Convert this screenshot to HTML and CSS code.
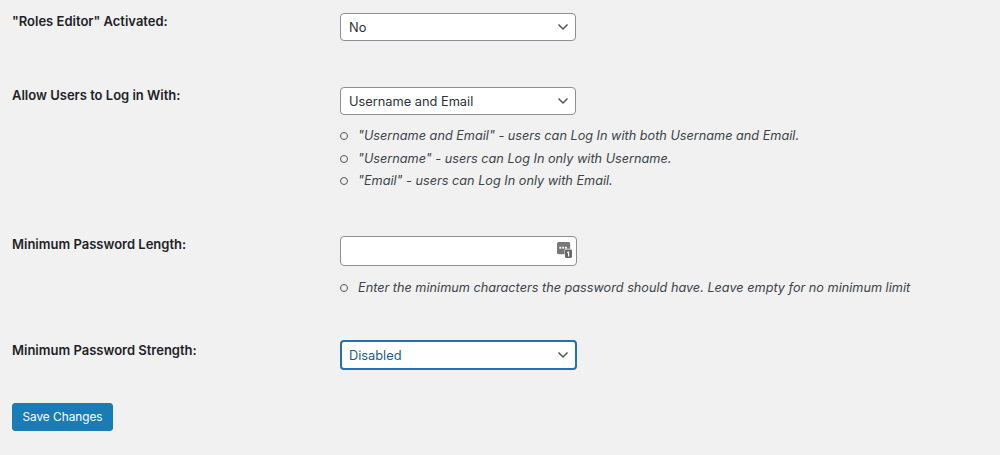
FILE: index.html
```html
<!DOCTYPE html>
<html lang="en">
<head>
<meta charset="utf-8">
<title>Settings</title>
<link rel="stylesheet" href="styles.css">
</head>
<body>
<form class="settings">
  <div class="row row-roles">
    <label class="label">"Roles Editor" Activated:</label>
    <div class="field">
      <select class="select"><option>No</option></select>
    </div>
  </div>
  <div class="row row-login">
    <label class="label">Allow Users to Log in With:</label>
    <div class="field">
      <select class="select"><option>Username and Email</option></select>
      <ul class="hints">
        <li>"Username and Email" - users can Log In with both Username and Email.</li>
        <li>"Username" - users can Log In only with Username.</li>
        <li>"Email" - users can Log In only with Email.</li>
      </ul>
    </div>
  </div>
  <div class="row row-length">
    <label class="label">Minimum Password Length:</label>
    <div class="field">
      <div class="input-wrap">
        <input class="input" type="text">
        <svg class="pw-icon" width="15" height="17" viewBox="0 0 16 18" aria-hidden="true">
          <path fill="#777" d="M2 0h10.500A1.500 1.500 0 0 1 14 1.500V7h-3.500A2.500 2.500 0 0 0 8 9.500V13H2a2 2 0 0 1-2-2V2a2 2 0 0 1 2-2z"/>
          <rect x="2.500" y="5" width="2" height="2" fill="#fff"/>
          <rect x="5.500" y="5" width="2" height="2" fill="#fff"/>
          <rect x="8.500" y="5" width="2" height="2" fill="#fff"/>
          <rect x="8.500" y="8" width="7.500" height="9" rx="1.500" fill="#666"/>
          <path fill="#fff" d="M11.700 10h1.300v5.500h-1.300v-4l-1 .5v-1.100z"/>
        </svg>
      </div>
      <ul class="hints hints-single">
        <li>Enter the minimum characters the password should have. Leave empty for no minimum limit</li>
      </ul>
    </div>
  </div>
  <div class="row row-strength">
    <label class="label">Minimum Password Strength:</label>
    <div class="field">
      <select class="select select-focus"><option>Disabled</option></select>
    </div>
  </div>
  <button class="save" type="button">Save Changes</button>
</form>
</body>
</html>
```
FILE: styles.css
```css
* { box-sizing: border-box; }
html, body { margin: 0; height: 455px; overflow: hidden; }
body {
  background: #f1f1f1;
  color: #2c3338;
  font-family: Inter, "Liberation Sans", sans-serif;
  font-size: 13px;
}
.settings { padding: 13px 0 0 12px; }
.row { display: flex; align-items: flex-start; }
.row-login { margin-top: 46px; }
.row-length { margin-top: 43px; }
.row-strength { margin-top: 41px; }
.label {
  flex: 0 0 328px;
  font-weight: 600;
  font-size: 13px;
  line-height: 16px;
  color: #1d2327;
}
.row-strength .label { padding-top: 2px; }
.field { flex: 0 0 auto; }
.select {
  display: block;
  appearance: none;
  width: 236px;
  height: 28px;
  margin: 0;
  padding: 1px 24px 0 8px;
  font: 12.800px/26px Inter, "Liberation Sans", sans-serif;
  color: #2c3338;
  background: #fff url("data:image/svg+xml,%3Csvg xmlns='http://www.w3.org/2000/svg' width='12' height='8' viewBox='0 0 12 8'%3E%3Cpath d='M1.500 1.500 6 6l4.500-4.500' fill='none' stroke='%23555' stroke-width='1.500'/%3E%3C/svg%3E") no-repeat right 6px center;
  border: 1px solid #8c8f94;
  border-radius: 4px;
}
.select-focus {
  width: 237px;
  height: 30px;
  color: #135e96;
  border: 2px solid #2271b1;
  padding-left: 7px;
}
.hints {
  list-style: none;
  margin: 10px 0 0;
  padding: 0;
  font-style: italic;
  font-size: 12.700px;
  line-height: 22.500px;
  color: #3c434a;
  white-space: nowrap;
}
.hints-single { margin-top: 11px; }
.hints li { display: flex; align-items: center; gap: 10px; }
.hints li::before {
  content: "";
  flex: 0 0 6px;
  height: 6px;
  border: 1px solid #555;
  border-radius: 50%;
}
.input-wrap { position: relative; width: 237px; }
.input {
  display: block;
  width: 100%;
  height: 30px;
  background: #fff;
  border: 1px solid #8c8f94;
  border-radius: 4px;
}
.pw-icon { position: absolute; top: 6px; right: 5px; }
.save {
  display: block;
  margin-top: 33px;
  width: 101px;
  height: 28px;
  padding: 0;
  background: #1a7cb7;
  border: 1px solid #1a7cb7;
  border-radius: 3px;
  color: #fff;
  font: 11.800px/26px Inter, "Liberation Sans", sans-serif;
}
```
